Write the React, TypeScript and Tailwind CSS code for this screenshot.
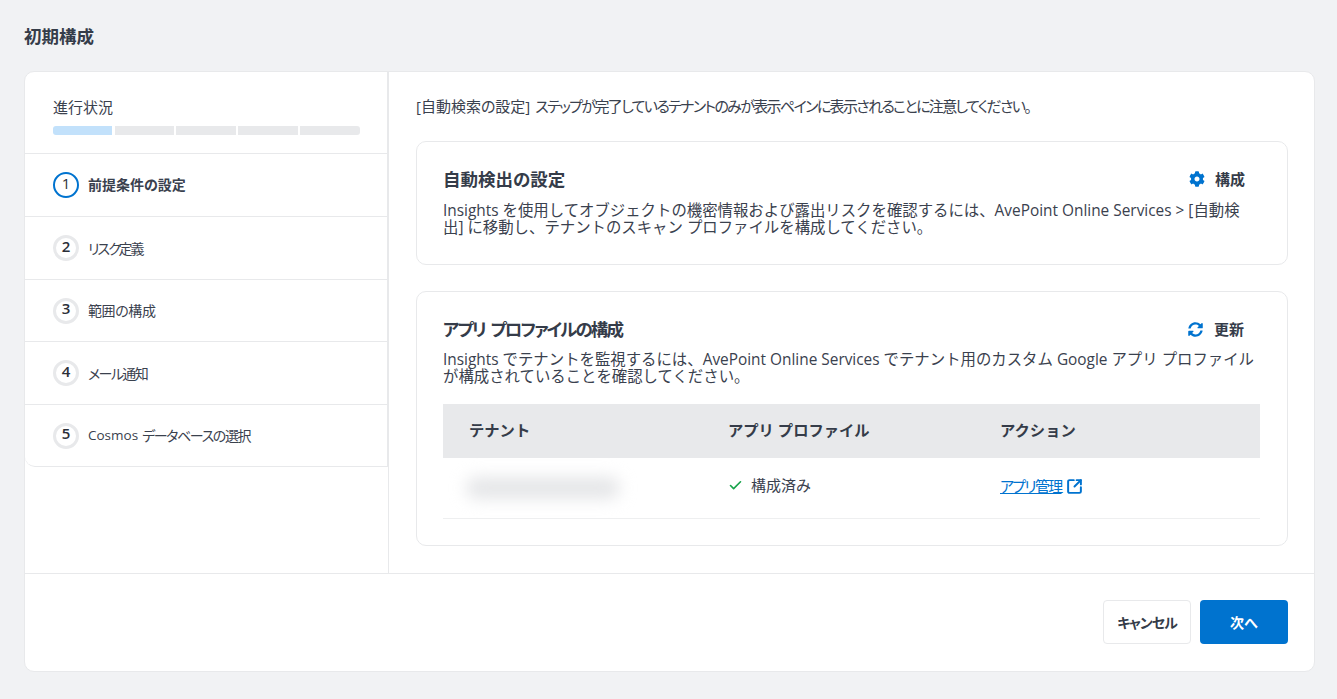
import { Check, SquareArrowOutUpRight } from "lucide-react";
import { FaCog, FaSyncAlt } from "react-icons/fa";

const steps = [
	{ n: 1, label: "前提条件の設定", h: "h-[63px]", track: "mb-[2px]" },
	{ n: 2, label: "リスク定義", h: "h-[63px]", track: "tracking-[-2px]" },
	{ n: 3, label: "範囲の構成", h: "h-[62px]", track: "tracking-[-0.4px]" },
	{ n: 4, label: "メール通知", h: "h-[63px]", track: "tracking-[-1.6px]" },
	{ n: 5, label: "データベースの選択", h: "h-[62px]", track: "tracking-[-1.4px]" },
];

function Step({ n, label, h, track }: { n: number; label: string; h: string; track: string }) {
	const active = n === 1;
	return (
		<div className={`${h} flex items-center border-b-[1px] border-[#e8e9eb] pl-[28px] ${n === 5 ? "rounded-bl-[10px]" : ""}`}>
			<div className={`w-[26px] h-[26px] rounded-full flex items-center justify-center text-[15px] pb-[4px] leading-none text-[#2b2f38] ${active ? "border-[2.5px] border-[#0073cf]" : "border-[3px] border-[#e8e9eb] font-semibold"}`}>
				{n}
			</div>
			{n === 5 && <span className="ml-[9px] mr-[4px] text-[13.5px] text-[#3a414e]">Cosmos</span>}
			<span className={`${n === 5 ? "" : "ml-[9px]"} text-[14px] [font-feature-settings:'palt'] text-[#3a414e] ${track} ${active ? "font-semibold" : ""}`}>
				{label}
			</span>
		</div>
	);
}

function CardHead({ title, action, icon, track }: { title: string; action: string; icon: React.ReactNode; track: string }) {
	return (
		<div className="flex items-center justify-between h-[22px]">
			<h2 className={`text-[17.5px] font-bold leading-[22px] [font-feature-settings:'palt'] text-[#353c49] ${track}`}>{title}</h2>
			<button className="flex items-center mr-[16px] text-[15px] font-semibold text-[#353c49]">
				<span className="w-[26px] text-[#0073cf]">{icon}</span>
				{action}
			</button>
		</div>
	);
}

export default function App() {
	return (
		<div className="min-h-[699px] bg-[#f1f2f4] px-[24px] pt-[25px] font-['Open_Sans','Noto_Sans_CJK_JP',sans-serif] text-[#3a414e]">
			<h1 className="h-[46px] text-[17.5px] font-bold leading-[22px] text-[#353c49]">初期構成</h1>
			<div className="w-[1291px] h-[601px] rounded-[10px] border border-[#e8e9eb] bg-white flex flex-col overflow-hidden">
				<div className="flex h-[502px] border-b border-[#e8e9eb]">
					<aside className="w-[364px] border-r border-[#e8e9eb]">
						<div className="border-r-[1px] border-[#e8e9eb]">
							<div className="h-[82px] border-b border-[#e8e9eb] pl-[28px] pt-[24px]">
								<div className="text-[15px] leading-[22px] text-[#3a414e]">進行状況</div>
								<div className="flex gap-[2px] mt-[8px] w-[307px] h-[9px] rounded-[3px] overflow-hidden">
									<div className="w-[59px] mr-[1px] bg-[#c2e1fb]" />
									<div className="w-[59px] bg-[#e8e9eb]" />
									<div className="w-[60px] bg-[#e8e9eb]" />
									<div className="w-[60px] bg-[#e8e9eb]" />
									<div className="w-[60px] bg-[#e8e9eb]" />
								</div>
							</div>
							{steps.map((s) => (
								<Step key={s.n} {...s} />
							))}
						</div>
					</aside>
					<main className="flex-1 pl-[27px] pr-[26px] pt-[23px]">
						<div className="flex gap-[5px] text-[15px] leading-[22px] text-[#3a414e] [font-feature-settings:'palt']">
							<span>[自動検索の設定]</span>
							<span className="tracking-[-1.65px]">ステップが完了しているテナントのみが表示ペインに表示されることに注意してください。</span>
						</div>
						<section className="mt-[24px] h-[124px] rounded-[10px] border border-[#e8e9eb] px-[26px] pt-[26px]">
							<CardHead title="自動検出の設定" action="構成" icon={<FaCog size={16} />} track="" />
							<p className="mt-[12px] w-[800px] text-[15.4px] leading-[17px] text-[#3a414e]">
								Insights を使用してオブジェクトの機密情報および露出リスクを確認するには、AvePoint Online Services &gt; [自動検出] に移動し、テナントのスキャン プロファイルを構成してください。
							</p>
						</section>
						<section className="mt-[26px] h-[255px] rounded-[10px] border border-[#e8e9eb] pl-[26px] pr-[27px] pt-[26px]">
							<CardHead title="アプリ プロファイルの構成" action="更新" icon={<FaSyncAlt size={15} />} track="tracking-[-1.9px] [word-spacing:3px]" />
							<p className="mt-[11px] w-[815px] text-[15.4px] leading-[17px] text-[#3a414e]">
								Insights でテナントを監視するには、AvePoint Online Services でテナント用のカスタム Google アプリ プロファイルが構成されていることを確認してください。
							</p>
							<div className="mt-[19px] grid grid-cols-[285px_272px_1fr] h-[54px] items-center bg-[#e8e9eb] pb-[2px] text-[15.3px] font-bold text-[#353c49]">
								<div className="pl-[26px]">テナント</div>
								<div>アプリ プロファイル</div>
								<div>アクション</div>
							</div>
							<div className="grid grid-cols-[285px_272px_1fr] h-[61px] items-center border-b border-[#eeeff0] text-[15px]">
								<div className="pl-[23px]">
									<div className="w-[154px] h-[22px] rounded-full bg-[#e5e6e8] blur-[8px]" />
								</div>
								<div className="flex items-center gap-[8px] pb-[5px]">
									<Check size={15} strokeWidth={2.6} className="text-[#16a34a]" />
									<span>構成済み</span>
								</div>
								<div className="flex items-center gap-[4px] pb-[4px]">
									<a href="#" className="tracking-[-1.7px] [font-feature-settings:'palt'] text-[#0073cf] underline">アプリ管理</a>
									<SquareArrowOutUpRight size={17} strokeWidth={2.8} className="text-[#0073cf]" />
								</div>
							</div>
						</section>
					</main>
				</div>
				<div className="flex-1 flex justify-end items-start gap-[9px] pt-[26px] pr-[26px]">
					<button className="w-[88px] h-[44px] rounded-[4px] border border-[#e8e9eb] bg-white text-[14px] font-bold tracking-[-1px] [font-feature-settings:'palt'] text-[#353c49]">キャンセル</button>
					<button className="w-[88px] h-[44px] rounded-[4px] bg-[#0073cf] text-[14px] font-bold text-white">次へ</button>
				</div>
			</div>
		</div>
	);
}
